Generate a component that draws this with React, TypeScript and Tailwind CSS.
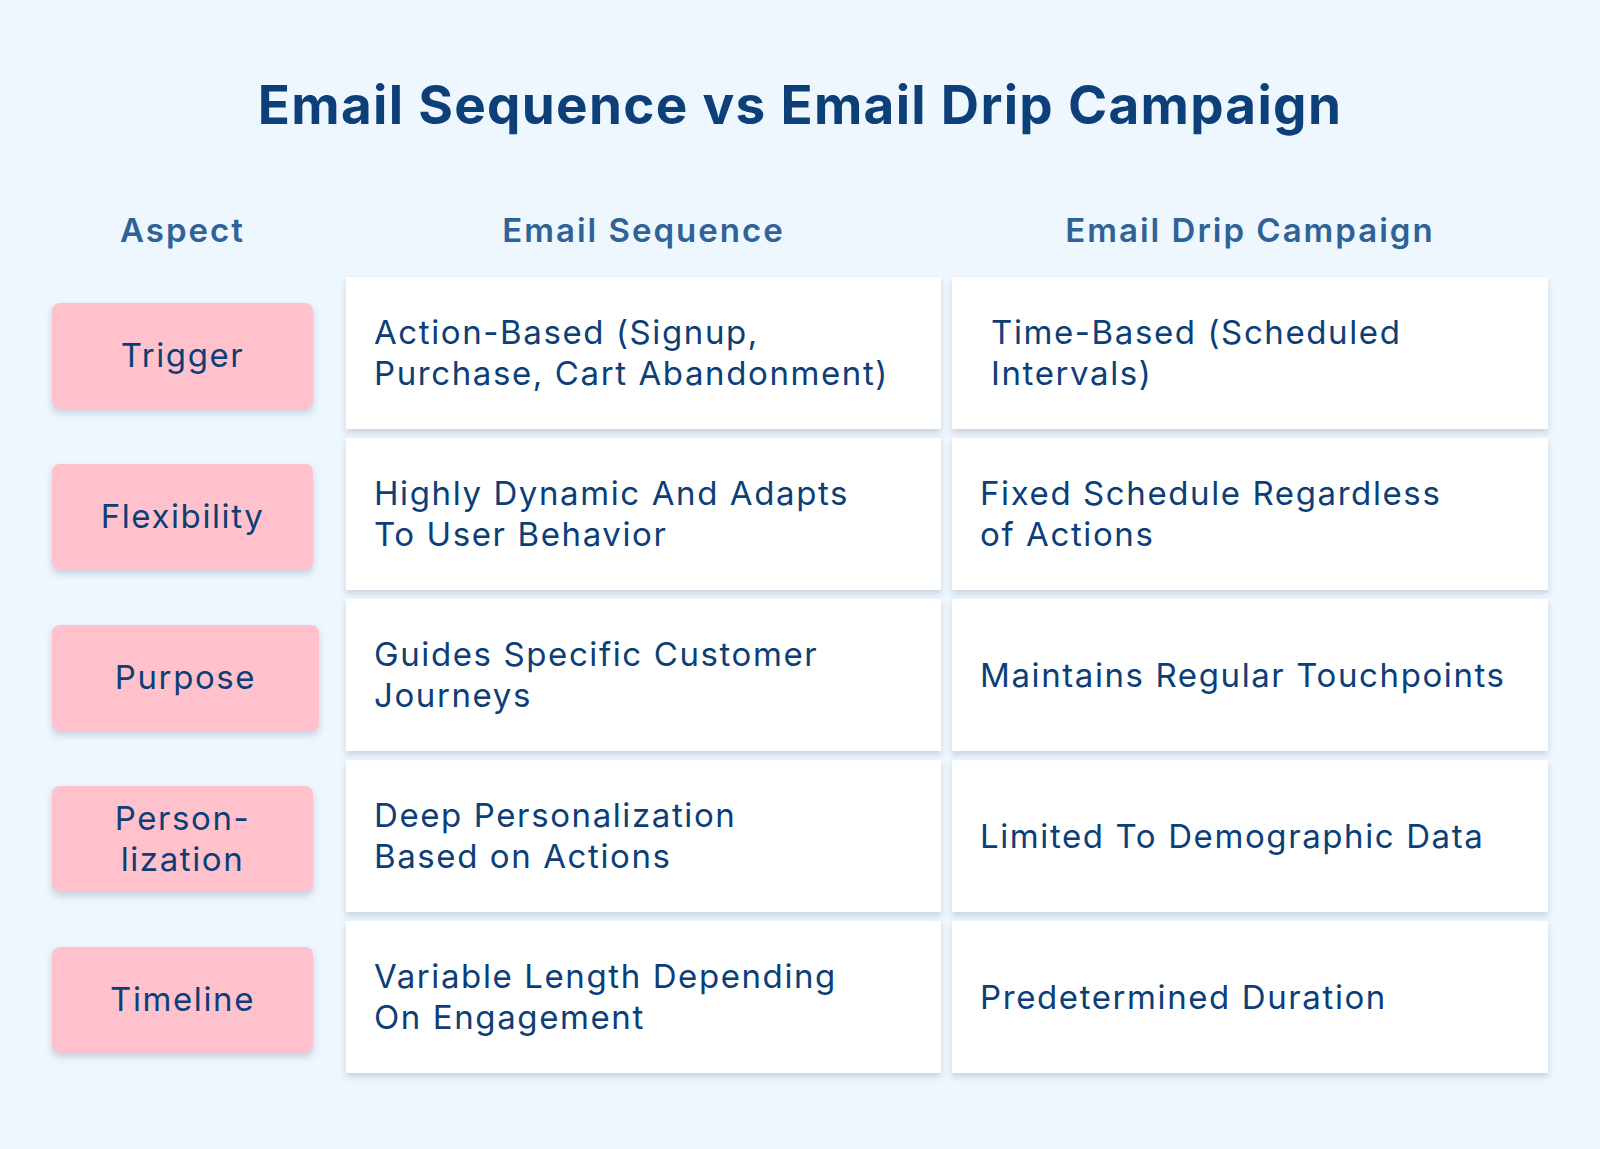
const rows = [
  {
    aspect: 'Trigger',
    seq: ['Action-Based (Signup,', 'Purchase, Cart Abandonment)'],
    drip: ['Time-Based (Scheduled', 'Intervals)'],
    dripIndent: true,
  },
  {
    aspect: 'Flexibility',
    seq: ['Highly Dynamic And Adapts', 'To User Behavior'],
    drip: ['Fixed Schedule Regardless', 'of Actions'],
  },
  {
    aspect: 'Purpose',
    seq: ['Guides Specific Customer', 'Journeys'],
    drip: ['Maintains Regular Touchpoints'],
    wide: true,
  },
  {
    aspect: 'Person-\nlization',
    seq: ['Deep Personalization', 'Based on Actions'],
    drip: ['Limited To Demographic Data'],
  },
  {
    aspect: 'Timeline',
    seq: ['Variable Length Depending', 'On Engagement'],
    drip: ['Predetermined Duration'],
  },
];

function Cell({ lines, indent }: { lines: string[]; indent?: boolean }) {
  return (
    <div
      className={`flex h-[152px] items-center bg-white shadow-[0_4px_6px_rgba(120,140,165,0.3)] ${
        indent ? 'pl-[39px]' : 'pl-[28px]'
      }`}
    >
      <div className="text-[33px] leading-[41px] tracking-[1.6px] text-[#0c3e78]">
        {lines.map((l) => (
          <div key={l}>{l}</div>
        ))}
      </div>
    </div>
  );
}

export default function App() {
  return (
    <div
      className="h-[1149px] w-[1600px] bg-[#eef6fe]"
      style={{ fontFamily: 'Inter, "Noto Sans", sans-serif' }}
    >
      <h1 className="pt-[74px] text-center text-[53px] font-bold leading-[62px] tracking-[1.3px] text-[#0d3f78]">
        Email Sequence vs Email Drip Campaign
      </h1>

      <div className="mt-[74px] px-[52px]">
        <div className="grid grid-cols-[283px_595px_596px] gap-x-[11px] text-[33px] font-semibold leading-[40px] tracking-[2px] text-[#2f6397]">
          <div className="w-[261px] text-center">Aspect</div>
          <div className="text-center">Email Sequence</div>
          <div className="text-center">Email Drip Campaign</div>
        </div>

        <div className="mt-[27px] flex flex-col gap-y-[9px]">
          {rows.map((r) => (
            <div key={r.aspect} className="grid grid-cols-[283px_595px_596px] gap-x-[11px]">
              <div className="flex items-center pt-[5px]">
                <div
                  className={`flex h-[106px] items-center justify-center rounded-[8px] bg-[#ffc2cc] text-center text-[33px] leading-[41px] tracking-[1.6px] whitespace-pre-line text-[#0c3e78] shadow-[0_4px_7px_rgba(120,140,165,0.35)] ${
                    r.wide ? 'w-[267px]' : 'w-[261px]'
                  }`}
                >
                  {r.aspect}
                </div>
              </div>
              <Cell lines={r.seq} />
              <Cell lines={r.drip} indent={r.dripIndent} />
            </div>
          ))}
        </div>
      </div>
    </div>
  );
}
